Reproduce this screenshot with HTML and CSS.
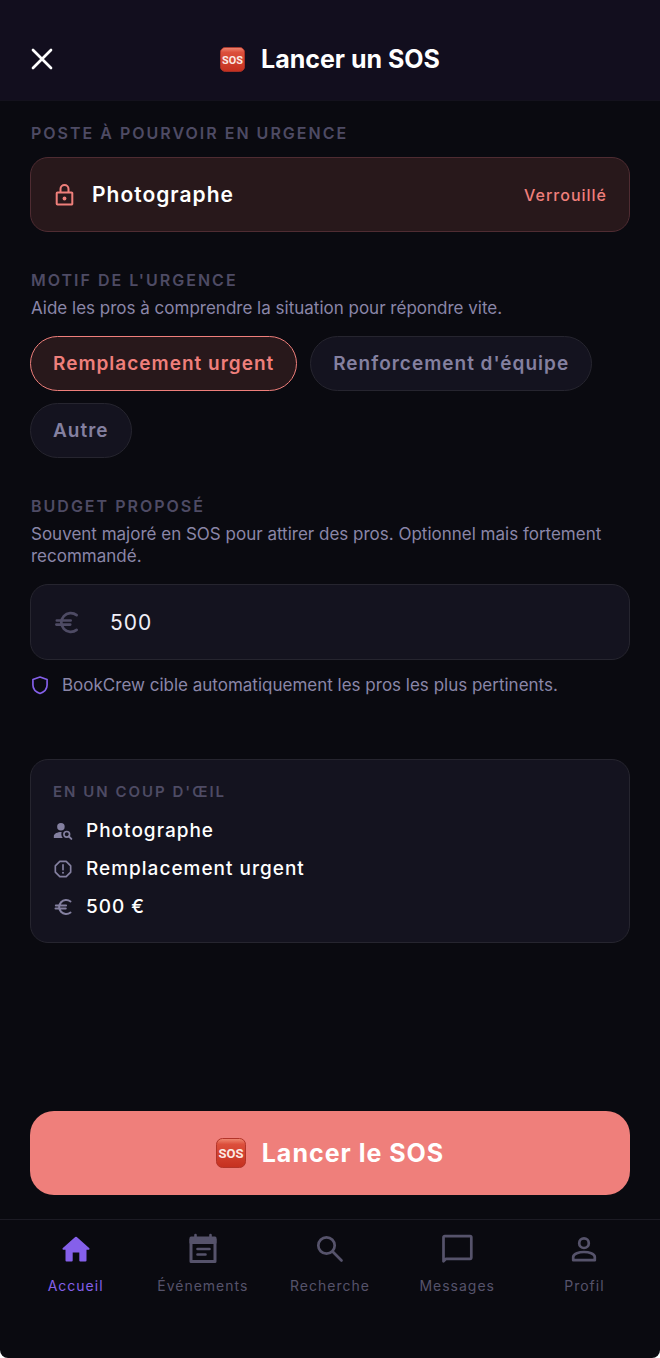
FILE: index.html
```
<!DOCTYPE html>
<html lang="fr">
<head>
  <meta charset="UTF-8">
  <meta name="viewport" content="width=device-width, initial-scale=1">
  <title>Lancer un SOS</title>
  <link rel="stylesheet" href="styles.css">
</head>
<body>
  <!-- shared icons -->
  <svg class="defs" width="0" height="0" aria-hidden="true">
    <defs>
      <linearGradient id="sos-red" x1="0" y1="0" x2="0" y2="1">
        <stop offset="0" stop-color="#f08a74"/>
        <stop offset="0.2" stop-color="#dc4f3c"/>
        <stop offset="1" stop-color="#c5301f"/>
      </linearGradient>
      <symbol id="sos" viewBox="0 0 30 30">
        <rect x="0.5" y="0.5" width="29" height="29" rx="6" fill="url(#sos-red)" stroke="#b23429"/>
        <text class="sos-text" x="15" y="20" text-anchor="middle">SOS</text>
      </symbol>
      <symbol id="euro" viewBox="0 0 24 24">
        <path d="M21 5.400A8.400 8.400 0 1 0 21 18.600M3.400 10.200h12.300M3 13.800h12.300" fill="none" stroke="currentColor" stroke-width="2.400" stroke-linecap="round"/>
      </symbol>
    </defs>
  </svg>

  <div class="app">
    <header class="header">
      <button type="button" class="close" aria-label="Fermer">
        <svg width="24" height="24" viewBox="0 0 24 24"><path d="M3 3l18 18M21 3L3 21" fill="none" stroke="currentColor" stroke-width="2.700" stroke-linecap="round"/></svg>
      </button>
      <h1><svg width="25" height="25" aria-hidden="true"><use href="#sos"/></svg>Lancer un SOS</h1>
    </header>

    <form class="content">
      <section>
        <h2>POSTE À POURVOIR EN URGENCE</h2>
        <div class="locked">
          <svg width="24" height="24" viewBox="0 0 24 24"><path d="M4.500 9.500h14a.8.8 0 0 1 .8.8v10.400a.8.8 0 0 1-.8.8h-14a.8.8 0 0 1-.8-.8V10.300a.8.8 0 0 1 .8-.8zM7.500 9.500V6a4 4 0 0 1 8 0v3.500" fill="none" stroke="currentColor" stroke-width="2"/><circle cx="11.500" cy="15.500" r="1.900" fill="currentColor"/></svg>
          <strong>Photographe</strong>
          <span class="state">Verrouillé</span>
        </div>
      </section>

      <section>
        <h2>MOTIF DE L'URGENCE</h2>
        <p class="help">Aide les pros à comprendre la situation pour répondre vite.</p>
        <div class="chips">
          <input type="radio" name="motif" id="remplacement" checked>
          <label for="remplacement">Remplacement urgent</label>
          <input type="radio" name="motif" id="renfort">
          <label for="renfort">Renforcement d'équipe</label>
          <input type="radio" name="motif" id="autre">
          <label for="autre">Autre</label>
        </div>
      </section>

      <section>
        <h2><label for="budget">BUDGET PROPOSÉ</label></h2>
        <p class="help">Souvent majoré en SOS pour attirer des pros. Optionnel mais fortement recommandé.</p>
        <div class="field">
          <svg width="27" height="27" aria-hidden="true"><use href="#euro"/></svg>
          <input type="text" id="budget" inputmode="numeric" value="500">
        </div>
        <p class="note">
          <svg width="20" height="20" viewBox="0 0 24 24"><path d="M12 2.500L20.500 5.300V12c0 4.600-3 8.200-8.500 10.200C6.500 20.200 3.500 16.600 3.500 12V5.300z" fill="none" stroke="currentColor" stroke-width="2" stroke-linejoin="round"/></svg>
          BookCrew cible automatiquement les pros les plus pertinents.
        </p>
      </section>

      <section class="summary">
        <h3>EN UN COUP D'ŒIL</h3>
        <ul>
          <li>
            <svg width="20" height="20" viewBox="0 0 24 24" fill="currentColor"><circle cx="9.500" cy="7" r="4.500"/><path d="M10.400 13.200C6 13 1 15 1 18v2.500h10.800c-1.900-2.100-2.200-5-1.400-7.300z"/><circle cx="16.500" cy="16" r="3.400" fill="none" stroke="currentColor" stroke-width="2"/><path d="M19 18.500l3 3" stroke="currentColor" stroke-width="2.400" stroke-linecap="round"/></svg>
            Photographe
          </li>
          <li>
            <svg width="20" height="20" viewBox="0 0 24 24"><path d="M8.200 2.800h7.600l5.400 5.400v7.600l-5.400 5.400H8.200l-5.400-5.400V8.200z" fill="none" stroke="currentColor" stroke-width="2" stroke-linejoin="round"/><path d="M12 7v6" stroke="currentColor" stroke-width="2" stroke-linecap="round"/><circle cx="12" cy="16.600" r="1.200" fill="currentColor"/></svg>
            Remplacement urgent
          </li>
          <li>
            <svg width="20" height="20" aria-hidden="true"><use href="#euro"/></svg>
            500 €
          </li>
        </ul>
      </section>

      <button type="submit" class="submit"><svg width="30" height="30" aria-hidden="true"><use href="#sos"/></svg>Lancer le SOS</button>
    </form>

    <nav class="tabs">
      <a href="#accueil" class="active">
        <svg width="32" height="32" viewBox="0 0 32 32" fill="currentColor"><path d="M15.200 4Q16 3.300 16.800 4L29.400 15.300Q30 16.500 28.800 16.800H26.500V27.500Q26.500 28.500 25.500 28.500H20.300Q19.300 28.500 19.300 27.500V19.600H12.700V27.500Q12.700 28.500 11.700 28.500H6.500Q5.500 28.500 5.500 27.500V16.800H3.200Q2 16.500 2.600 15.300z"/></svg>
        Accueil
      </a>
      <a href="#evenements">
        <svg width="32" height="32" viewBox="0 0 32 32" fill="none" stroke="currentColor" stroke-width="3" stroke-linecap="round" stroke-linejoin="round"><path d="M4 5h24v23.500H4z"/><path d="M4 6.500h24v3H4z" fill="currentColor"/><path d="M8.500 2v3M23.500 2v3M10.500 16h12M10.500 21.500h8" stroke-width="2.600"/></svg>
        Événements
      </a>
      <a href="#recherche">
        <svg width="32" height="32" viewBox="0 0 32 32" fill="none" stroke="currentColor" stroke-width="2.700" stroke-linecap="round"><circle cx="12.500" cy="12.500" r="8.200"/><path d="M18.800 18.800l8.700 8.700"/></svg>
        Recherche
      </a>
      <a href="#messages">
        <svg width="32" height="32" viewBox="0 0 32 32" fill="none" stroke="currentColor" stroke-width="2.700" stroke-linejoin="round"><path d="M2.500 28.200V4.300a1.200 1.200 0 0 1 1.200-1.200h25.400a1.200 1.200 0 0 1 1.200 1.200v20.300a1.200 1.200 0 0 1-1.200 1.200H5z"/></svg>
        Messages
      </a>
      <a href="#profil">
        <svg width="32" height="32" viewBox="0 0 32 32" fill="none" stroke="currentColor" stroke-width="2.700" stroke-linejoin="round"><circle cx="16" cy="10.200" r="4.800"/><path d="M5.200 27.200v-3.200c0-3.500 6-5 10.800-5s10.800 1.500 10.800 5v3.200z"/></svg>
        Profil
      </a>
    </nav>
  </div>
</body>
</html>
```
FILE: styles.css
```
* {
  box-sizing: border-box;
}
html {
  background: #fff;
}
body {
  margin: 0;
  font-family: Inter, "Liberation Sans", sans-serif;
  color: #fff;
}
h1, h2, h3, p, ul {
  margin: 0;
  padding: 0;
}
svg {
  flex: none;
}
button, input {
  font-family: inherit;
}
.defs {
  position: absolute;
}
.sos-text {
  font-family: Roboto, sans-serif;
  font-size: 13px;
  font-weight: 700;
  letter-spacing: 0;
  fill: #fbe9e4;
}
.app {
  display: flex;
  flex-direction: column;
  min-height: 100vh;
  background: #0a0a10;
  border-radius: 0 0 8px 8px;
}

/* header */
.header {
  display: grid;
  grid-template-columns: 24px 1fr 24px;
  align-items: center;
  padding: 44px 30px 26px;
  background: #120e1e;
  border-bottom: 1px solid #14121d;
}
.close {
  display: flex;
  padding: 0;
  border: none;
  background: none;
  color: #fff;
  cursor: pointer;
}
h1 {
  display: flex;
  align-items: center;
  justify-content: center;
  gap: 16px;
  font-size: 25px;
  line-height: 30px;
  font-weight: 700;
}

/* form */
.content {
  flex: 1;
  display: flex;
  flex-direction: column;
  padding: 22px 30px 24px;
}
section + section {
  margin-top: 38px;
}
h2 {
  padding-left: 1px;
  font-size: 16px;
  line-height: 20px;
  font-weight: 600;
  letter-spacing: 2px;
  color: #4e4b64;
}
.help {
  padding-left: 1px;
  margin-top: 7px;
  font-size: 17px;
  line-height: 22px;
  color: #8a86a8;
}
.locked {
  display: flex;
  align-items: center;
  gap: 15px;
  height: 75px;
  margin-top: 14px;
  padding: 0 22px;
  border: 1px solid #4f2c32;
  border-radius: 18px;
  background: #28181b;
  color: #ef7f7b;
}
.locked strong {
  flex: 1;
  font-size: 21px;
  font-weight: 600;
  letter-spacing: 1px;
  color: #fff;
}
.state {
  font-size: 16px;
  font-weight: 500;
  letter-spacing: 1px;
}
.chips {
  display: flex;
  flex-wrap: wrap;
  gap: 12px 13px;
  margin-top: 17px;
}
.chips input {
  position: absolute;
  opacity: 0;
}
.chips label {
  padding: 15px 22px;
  border: 1px solid #26252f;
  border-radius: 28px;
  background: #14131f;
  font-size: 19px;
  line-height: 23px;
  font-weight: 600;
  letter-spacing: 1px;
  color: #8480a0;
  cursor: pointer;
}
.chips input:checked + label {
  border-color: #ef7f7b;
  background: #28181b;
  color: #ef7f7b;
}
.field {
  display: flex;
  align-items: center;
  gap: 30px;
  height: 76px;
  margin-top: 17px;
  padding: 0 22px;
  border: 1px solid #26252f;
  border-radius: 18px;
  background: #14131f;
  color: #4e4b64;
}
.field input {
  flex: 1;
  min-width: 0;
  padding: 0;
  border: none;
  outline: none;
  background: none;
  font-size: 21px;
  letter-spacing: 1px;
  color: #f0eff8;
}
.note {
  display: flex;
  align-items: center;
  gap: 12px;
  margin-top: 14px;
  font-size: 17px;
  line-height: 22px;
  color: #8a86a8;
}
.note svg {
  color: #8560ea;
}
.content .summary {
  margin-top: 63px;
  padding: 22px;
  border: 1px solid #26252f;
  border-radius: 18px;
  background: #14131f;
}
h3 {
  font-size: 15px;
  line-height: 20px;
  font-weight: 600;
  letter-spacing: 2px;
  color: #4e4b64;
}
.summary ul {
  display: grid;
  gap: 12px;
  margin-top: 16px;
  list-style: none;
}
.summary li {
  display: flex;
  align-items: center;
  gap: 13px;
  font-size: 19px;
  line-height: 26px;
  font-weight: 500;
  letter-spacing: 1px;
}
.summary svg {
  color: #8480a0;
}
.submit {
  display: flex;
  align-items: center;
  justify-content: center;
  gap: 16px;
  height: 84px;
  margin-top: auto;
  border: none;
  border-radius: 24px;
  background: #ef7f7b;
  color: #fff;
  font-size: 25px;
  font-weight: 700;
  letter-spacing: 1px;
  cursor: pointer;
}

/* bottom navigation */
.tabs {
  display: grid;
  grid-template-columns: repeat(5, 1fr);
  padding: 13px 12px 62px;
  border-top: 1px solid #1c1b24;
}
.tabs a {
  display: flex;
  flex-direction: column;
  align-items: center;
  gap: 11px;
  font-size: 14px;
  line-height: 20px;
  letter-spacing: 1px;
  color: #56536b;
  text-decoration: none;
}
.tabs .active {
  color: #8560ea;
}
```
